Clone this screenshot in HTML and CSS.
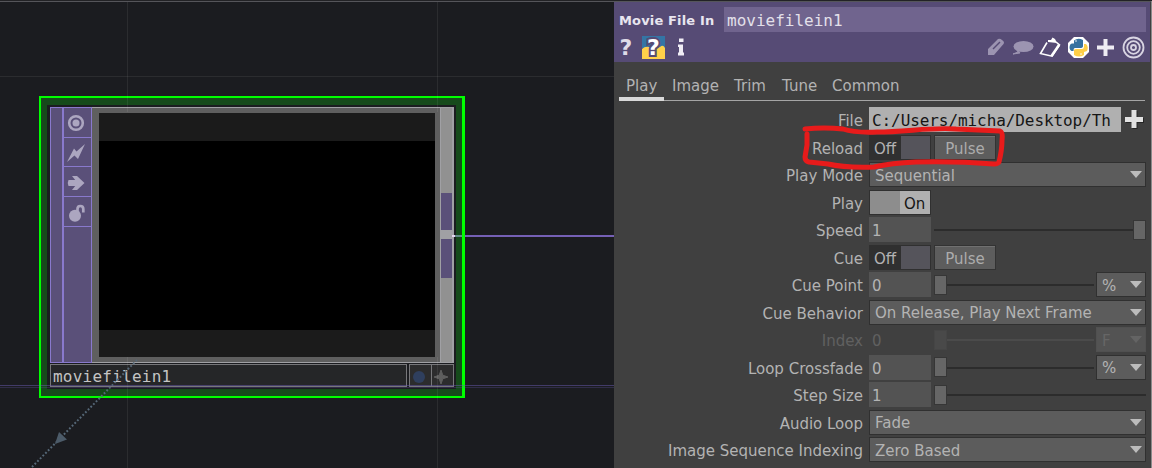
FILE: index.html
```
<!DOCTYPE html>
<html lang="en">
<head>
<meta charset="utf-8">
<title>Movie File In</title>
<link rel="stylesheet" href="styles.css">
</head>
<body>
<div class="app">
  <main class="network">
    <section class="node">
      <div class="node-body">
        <div class="body-main">
          <div class="input-strip"></div>
          <div class="flags">
            <div class="flag f1"><svg width="18" height="18" viewBox="0 0 18 18"><circle cx="9" cy="9" r="6.8" fill="none" stroke="#aca6c0" stroke-width="2.6"/><circle cx="9" cy="9" r="3.5" fill="#aca6c0"/></svg></div>
            <div class="flag f2"><svg width="18" height="20" viewBox="0 0 18 20"><path d="M0 19L7 5.5L9.500 8.500L18 1L11 16L7.500 12.500Z" fill="#aca6c0"/></svg></div>
            <div class="flag f3"><svg width="18" height="16" viewBox="0 0 18 16"><path d="M1.500 5H8.200L5 1H10L17.500 8L10 15H5L8.200 11H1.500Q0 8 1.500 5Z" fill="#aca6c0"/></svg></div>
            <div class="flag f4"><svg width="18" height="18" viewBox="0 0 18 18"><circle cx="8" cy="11.700" r="6" fill="#aca6c0"/><path d="M10.500 8V5Q10.500 2 13.300 2Q16.300 2 16.300 5V8.500" fill="none" stroke="#aca6c0" stroke-width="2.700"/></svg></div>
          </div>
          <div class="viewer"><div class="frame"><div class="movie"></div></div></div>
          <div class="output"><i></i><b></b></div>
        </div>
      </div>
      <div class="node-foot">
        <div class="node-name mono">moviefilein1</div>
        <div class="node-tools">
          <div><svg width="14" height="14"><circle cx="7" cy="7" r="6" fill="#2f3f5e"/></svg></div>
          <div><svg width="16" height="16" viewBox="0 0 16 16"><path d="M8 1L9.800 6.200L15 8L9.800 9.800L8 15L6.200 9.800L1 8L6.200 6.200Z" fill="#5e5e5e" stroke="#5e5e5e"/></svg></div>
        </div>
      </div>
    </section>
    <svg class="wires" width="614" height="468" viewBox="0 0 614 468">
      <path d="M127.500 0V112M127.500 357V468M437.500 0V112M437.500 357V468M0 76.500H614" stroke="#fff" stroke-opacity=".07"/>
      <path d="M0 385.500H614" stroke="#6959b0" stroke-opacity=".5"/>
      <path d="M0 387.500H614" stroke="#6959b0" stroke-opacity=".28"/>
      <path d="M465 236H614" stroke="#7560b5" stroke-width="2"/>
      <path d="M452 236H455" stroke="#e5d5ef" stroke-width="2"/>
      <path d="M455 236H462" stroke="#628b87" stroke-width="2"/>
      <path d="M32 467L137 360" stroke="#566878" stroke-width="2" stroke-dasharray="1.800 2"/>
      <path d="M55 444L59 432L67 439.500Z" fill="#4c5b69"/>
    </svg>
  </main>
  <aside class="panel">
    <header class="head">
      <div class="title-row"><strong>Movie File In</strong><div class="op-name mono">moviefilein1</div></div>
      <div class="tools">
        <svg class="ico" width="66" height="26" viewBox="0 0 66 26">
          <rect x="24" y="2" width="23" height="12" fill="#3475a5"/><path d="M24 15Q27 12 31 13L34 15L42 13Q45 10 47 14V25H24Z" fill="#ffd04a"/>
          <text x="1.500" y="21" font-size="22" fill="#dedbe8">?</text>
          <text x="29" y="21" font-size="22" fill="#fff" stroke="#564b75" stroke-width="4" paint-order="stroke">?</text>
        </svg>
        <svg class="info" width="10" height="26" viewBox="0 0 10 26"><path d="M1 4.500H5.500V8H1ZM0 10.500H5V18.500H6V21.500H0V18.500H1V13H0Z" fill="#f0edf5"/></svg>
        <svg class="right-tools" width="160" height="26" viewBox="0 0 160 26">
          <g fill="#9c94b1"><path d="M2 21V15L12 5Q14 4 16 6Q19 8 17.500 10L8 21Z"/><path d="M7 15L14 8" stroke="#564b75" stroke-width="1.500"/><ellipse cx="37.500" cy="12.500" rx="10" ry="5.500"/><path d="M30 14L32 18L27 20L34 19Z" stroke="#9c94b1"/></g>
          <path d="M61 8.500L54.500 19.500L66 22.200L73.500 11L70 8" fill="none" stroke="#fff" stroke-width="1.600"/><path d="M62 6L65 6L66.500 3.500L69 5L71 9L62 8Z" fill="#fff"/><path d="M73 11L65.500 22" stroke="#fff" stroke-width="2.500"/>
          <path d="M88 3H97L103 9V18L97 24H88L82 18V9Z" fill="#fff"/>
          <path d="M88 9.500V6.500Q92 3.500 97 6V12Q97 14 94 14H89Q87.500 14 87.500 17H85.500Q82.500 15 84 11Q84.500 9.500 86 9.500Z" fill="#3672a0"/><path d="M98 10H100Q103 13 101 17L98 18V21Q93 24 88 21V16Q88 15 91 15H96Q98 15 98 12Z" fill="#ffcf47"/><circle cx="90" cy="7" r=".8" fill="#fff"/><circle cx="95" cy="20" r=".8" fill="#fff"/>
          <path d="M119.500 5V22M111 13.500H128" stroke="#eeecf3" stroke-width="4"/>
          <g fill="none" stroke="#d8d4e2" stroke-width="1.800"><circle cx="147.500" cy="13.500" r="10"/><circle cx="147.500" cy="13.500" r="6.300"/><circle cx="147.500" cy="13.500" r="2.500"/></g>
        </svg>
      </div>
    </header>
    <nav class="tabs"><a class="t1 active">Play</a><a class="t2">Image</a><a class="t3">Trim</a><a class="t4">Tune</a><a class="t5">Common</a></nav>
    <div class="params">
      <div class="row"><label>File</label><div class="file mono">C:/Users/micha/Desktop/Th</div><svg class="plus" width="20" height="22" viewBox="0 0 20 22"><path d="M11 3V21M2 12.500H20" stroke="#262626" stroke-width="5"/><path d="M10 2V20M1 11.500H19" stroke="#e2e2e2" stroke-width="5"/></svg></div>
      <div class="row"><label>Reload</label><div class="toggle"><span>Off</span><i></i></div><div class="pulse">Pulse</div></div>
      <div class="row"><label>Play Mode</label><div class="menu"><span>Sequential</span><i class="arrow"></i></div></div>
      <div class="row"><label>Play</label><div class="toggle on"><i></i><span>On</span></div></div>
      <div class="row"><label>Speed</label><div class="num">1</div><div class="slider end"><i></i></div></div>
      <div class="row"><label>Cue</label><div class="toggle"><span>Off</span><i></i></div><div class="pulse">Pulse</div></div>
      <div class="row"><label>Cue Point</label><div class="num">0</div><div class="slider"><i></i></div><div class="menu unit"><span>%</span><i class="arrow"></i></div></div>
      <div class="row"><label>Cue Behavior</label><div class="menu"><span>On Release, Play Next Frame</span><i class="arrow"></i></div></div>
      <div class="row disabled"><label>Index</label><div class="num">0</div><div class="slider"><i></i></div><div class="menu unit"><span>F</span><i class="arrow"></i></div></div>
      <div class="row"><label>Loop Crossfade</label><div class="num">0</div><div class="slider"><i></i></div><div class="menu unit"><span>%</span><i class="arrow"></i></div></div>
      <div class="row"><label>Step Size</label><div class="num">1</div><div class="slider"><i></i></div></div>
      <div class="row"><label>Audio Loop</label><div class="menu"><span>Fade</span><i class="arrow"></i></div></div>
      <div class="row"><label>Image Sequence Indexing</label><div class="menu"><span>Zero Based</span><i class="arrow"></i></div></div>
    </div>
  </aside>
  <svg class="marker" width="206" height="46" viewBox="0 0 206 46"><path d="M4 4Q23 2 42 4Q54 8 76 7C105 7 130 2 155 4L199 6Q202 7 201 15Q201 25 198 37Q197 39 193 39Q155 36 115 37Q90 38 73 42Q44 43 27 39L8 37Q4 36 4 32L6 20V9" fill="none" stroke="#e81b1b" stroke-width="5" stroke-linecap="round" stroke-linejoin="round"/></svg>
</div>
</body>
</html>
```

FILE: styles.css
```
* { box-sizing: border-box; }
body { margin: 0; background: #1b1c20; font-family: "DejaVu Sans", sans-serif; font-size: 15px; color: #b3b3b3; }
.mono { font-family: "DejaVu Sans Mono", monospace; font-size: 16px; white-space: pre; }
.app { position: relative; display: flex; width: 1152px; height: 468px; overflow: hidden; border-top: 1px solid #222225; }
.app::before { content: ""; position: absolute; left: 0; top: 0; width: 1151px; height: 1px; background: #55555a; z-index: 3; }
.network { position: relative; width: 614px; height: 468px; background: #1b1c20; overflow: hidden; margin-top: -1px; }
.node { position: absolute; left: 39px; top: 96px; width: 426px; height: 302px; border: 2px solid #0f0; border-right-width: 3px; background: #164a1b; padding: 7px 6px; display: flex; flex-direction: column; }
.node-body { height: 259px; background: #1b1c20; padding: 2px 2px 1px 3px; }
.body-main { height: 256px; display: flex; }
.input-strip { width: 13px; background: #5a5079; border: 1px solid #8979cd; }
.flags { width: 29px; background: #5a5079; border: 1px solid #8979cd; }
.flag { display: flex; align-items: center; justify-content: center; height: 30px; border-bottom: 1px solid #8979cd; padding-right: 3px; padding-top: 1px; }
.f2 { height: 29px; }
.f3, .f4 { padding-top: 2px; }
.viewer { width: 348px; background: #5f5f5f; padding: 5px 5px 5px 7px; border: solid #a0a0a4; border-width: 1px 0; }
.frame { height: 244px; background: #1b1b1b; padding-top: 28px; }
.movie { height: 189px; background: #000; }
.output { width: 14px; height: 256px; background: #919191; border: solid #a0a0a4; border-width: 1px 2px 1px 1px; padding-top: 85px; }
.output i, .output b { display: block; background: #5a5079; height: 37px; }
.output b { height: 48px; border-top: 9px solid #a0a0a4; }
.node-foot { height: 25px; display: flex; gap: 2px; background: #1b1c20; padding: 0 2px 2px 3px; }
.node-name { width: 357px; border: 1px solid #77777a; background: #252628; color: #c4c4c4; padding-left: 2px; line-height: 23px; letter-spacing: .24px; }
.node-tools { display: flex; width: 45px; border: 1px solid #77777a; background: #2c2c2d; }
.node-tools div { width: 22px; display: flex; align-items: center; justify-content: center; padding-top: 2px; padding-right: 3px; }
.node-tools div + div { border-left: 1px solid #77777a; }
.wires { position: absolute; left: 0; top: 0; }
.panel { width: 538px; height: 468px; background: #404040; border-right: 1px solid #8b8b8b; padding-right: 1px; margin-top: -1px; }
.head { height: 62px; background: #564b75; padding-top: 7px; }
.title-row { display: flex; height: 25px; color: #e8e5ef; }
.title-row strong { width: 110px; padding-left: 5px; font-size: 13px; line-height: 27px; white-space: nowrap; letter-spacing: .15px; }
.op-name { width: 422px; background: #70648e; padding-left: 3px; line-height: 27px; color: #e3e0ea; }
.tools { display: flex; height: 26px; padding-left: 4px; padding-top: 2px; }
.tools text { font-family: "DejaVu Sans", sans-serif; font-weight: bold; }
.info { margin-left: -6px; }
.right-tools { margin-left: 298px; flex: none; }
.tabs { display: flex; width: 526px; height: 39px; margin-left: 5px; border-bottom: 1px solid #a5a5a5; line-height: 49px; }
.tabs a { white-space: nowrap; width: 55px; }
.tabs .t1 { width: 45px; height: 39px; padding-left: 7px; margin-right: 8px; border-bottom: 4px solid #d9d9d9; }
.tabs .t3 { width: 48px; margin-left: 7px; }
.tabs .t4 { width: 50px; }
.params { padding-top: 6px; }
.row { height: 27.540px; display: flex; align-items: flex-start; }
.row label { width: 249px; margin-right: 6px; text-align: right; line-height: 28px; white-space: nowrap; }
.file { width: 252px; height: 25px; background: #b0b0b0; color: #161616; padding-left: 3px; line-height: 28px; letter-spacing: -.08px; }
.plus { margin: 1px 0 0 3px; }
.toggle { display: flex; width: 62px; height: 25px; border: 1px solid #303030; background: #303030; line-height: 26px; }
.toggle span { width: 31px; padding-left: 4px; }
.toggle i { width: 29px; background: #55545b; }
.toggle.on { background: #b0b0b0; color: #161616; }
.toggle.on i { width: 30px; background: #8d8d8d; }
.toggle.on span { width: 30px; }
.pulse { width: 62px; height: 25px; margin-left: 3px; border: 1px solid #333; background: #5d5d5d; box-shadow: inset 0 1px #707070; text-align: center; line-height: 26px; color: #acacac; }
.menu { display: flex; justify-content: space-between; align-items: center; width: 277px; height: 25px; border: 1px solid #303030; background: #5c5c5c; padding: 2px 3px 0 5px; line-height: 22px; }
.arrow { width: 0; height: 0; margin-top: -2px; border: 6px solid transparent; border-top: 7px solid #bcbcbc; border-bottom: 0; }
.num { width: 62px; height: 25px; background: #535353; padding-left: 3px; line-height: 28px; }
.slider { position: relative; display: flex; align-items: center; width: 160px; height: 25px; margin-left: 3px; margin-right: 2px; background: linear-gradient(#2c2c2c, #2c2c2c) 0 12px / 100% 2px no-repeat; }
.slider i { width: 13px; height: 20px; background: #666; border: 1px solid #363636; }
.slider.end { width: 212px; justify-content: flex-end; margin-right: 0; }
.unit { width: 50px; }
.row:nth-child(11) .slider { width: 212px; margin-right: 0; }
.disabled { color: #606060; }
.disabled .num { background: none; }
.disabled .slider { background-image: linear-gradient(#4b4b4b, #4b4b4b); }
.disabled .slider i { background: #494949; border-color: #454545; }
.disabled .menu { background: #535353; border-color: #505050; }
.disabled .menu span { color: #666; }
.disabled .arrow { border-top-color: #646464; }
.marker { position: absolute; left: 801px; top: 124px; z-index: 4; }
```
